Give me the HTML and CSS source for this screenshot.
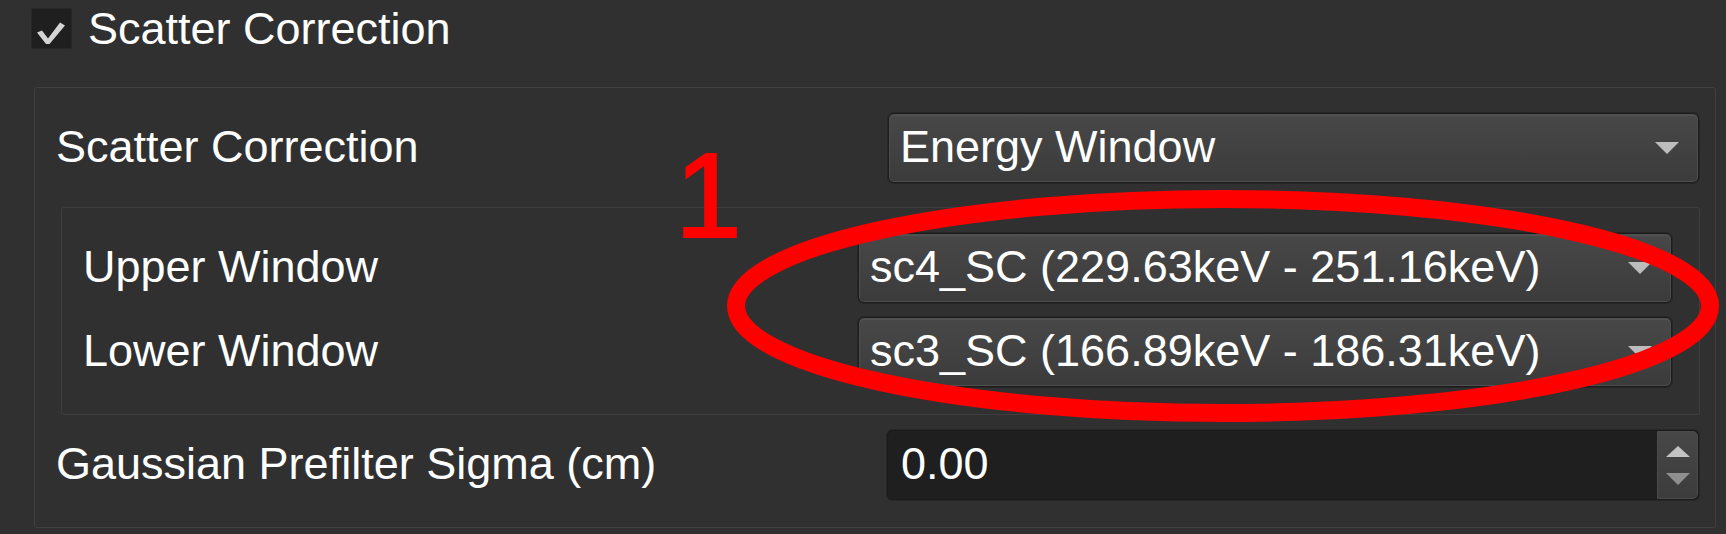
FILE: index.html
```html
<!DOCTYPE html>
<html lang="en">
<head>
<meta charset="utf-8">
<title>Scatter Correction</title>
<link rel="stylesheet" href="styles.css">
</head>
<body>
<div class="panel">
  <div class="header">
    <span class="checkbox">
      <svg class="check" width="41" height="41" viewBox="0 0 41 41"><path d="M6 24.5 L11 22.5 L17 30.5 L29 14.5 L34 17.5 L18.5 36 L15 36 Z" fill="#d4d4d4"/></svg>
    </span>
    <span class="title">Scatter Correction</span>
  </div>

  <div class="group">
    <div class="row row-outer">
      <span class="label">Scatter Correction</span>
      <div class="combo"><span class="combo-text">Energy Window</span><span class="arrow"></span></div>
    </div>

    <div class="subgroup">
      <div class="row row-inner">
        <span class="label">Upper Window</span>
        <div class="combo"><span class="combo-text">sc4_SC (229.63keV - 251.16keV)</span><span class="arrow"></span></div>
      </div>
      <div class="row row-inner">
        <span class="label">Lower Window</span>
        <div class="combo"><span class="combo-text">sc3_SC (166.89keV - 186.31keV)</span><span class="arrow"></span></div>
      </div>
    </div>

    <div class="row row-outer row-spin">
      <span class="label">Gaussian Prefilter Sigma (cm)</span>
      <div class="spin">
        <span class="spin-text">0.00</span>
        <div class="spin-buttons"><span class="spin-up"></span><span class="spin-down"></span></div>
      </div>
    </div>
  </div>

  <span class="mark-number">1</span>
  <svg class="mark-ellipse" width="1726" height="534" viewBox="0 0 1726 534">
    <ellipse cx="1223" cy="306" rx="487" ry="107" fill="none" stroke="#ff0000" stroke-width="18"/>
  </svg>
</div>
</body>
</html>
```

FILE: styles.css
```css
* {
  box-sizing: border-box;
}

html, body {
  margin: 0;
  padding: 0;
  background: #303030;
}

body {
  font-family: "Liberation Sans", Arial, sans-serif;
  font-size: 45px;
  color: #ffffff;
}

.panel {
  position: relative;
  width: 1726px;
  height: 534px;
  overflow: hidden;
}

.header {
  display: flex;
  align-items: center;
  gap: 16px;
  height: 49px;
  padding: 8px 0 0 31px;
}

.checkbox {
  display: block;
  width: 41px;
  height: 41px;
  background: #1f1f1f;
  border: 1px solid #272727;
  border-radius: 2px;
}

.check {
  display: block;
  margin: -1px;
}

.title {
  line-height: 41px;
  white-space: nowrap;
}

.group {
  width: 1682px;
  margin: 38px 0 0 34px;
  border: 1px solid #404040;
  border-radius: 3px;
  padding: 25px 16px 27px 21px;
}

.row {
  display: grid;
  align-items: start;
  height: 70px;
}

.row-outer {
  grid-template-columns: 832px 1fr;
}

.row-spin {
  grid-template-columns: 831px 1fr;
  margin-top: 15px;
}

.row-inner {
  grid-template-columns: 775px 1fr;
}

.row-inner + .row-inner {
  margin-top: 14px;
}

.label {
  line-height: 67px;
  white-space: nowrap;
}

.subgroup {
  margin: 24px -1px 0 5px;
  border: 1px solid #3e3e3e;
  border-radius: 3px;
  padding: 25px 27px 27px 21px;
}

.combo {
  display: flex;
  align-items: flex-start;
  height: 70px;
  padding: 0 19px 0 11px;
  border: 1px solid #1c1c1c;
  border-radius: 6px;
  background: linear-gradient(#484848, #3b3b3b);
  box-shadow: inset 0 0 0 1px #4e4e4e, inset 0 2px 0 #535353, 0 0 0 1px #262626;
}

.combo-text {
  line-height: 65px;
  white-space: nowrap;
}

.arrow {
  align-self: center;
  margin-left: auto;
  width: 0;
  height: 0;
  border-left: 12px solid transparent;
  border-right: 12px solid transparent;
  border-top: 12px solid #bdbdbd;
}

.spin {
  display: flex;
  align-items: stretch;
  height: 70px;
  padding-left: 13px;
  background: #1f1f1f;
  border: 1px solid #1a1a1a;
  border-radius: 5px;
  box-shadow: 0 0 0 1px #282828;
}

.spin-text {
  line-height: 66px;
}

.spin-buttons {
  margin-left: auto;
  width: 41px;
  display: flex;
  flex-direction: column;
  align-items: center;
  justify-content: center;
  gap: 16px;
  background: linear-gradient(#474747, #3c3c3c);
  border: 1px solid #4b4b4b;
  border-radius: 0 5px 5px 0;
}

.spin-up {
  width: 0;
  height: 0;
  border-left: 12px solid transparent;
  border-right: 12px solid transparent;
  border-bottom: 11px solid #c4c4c4;
}

.spin-down {
  width: 0;
  height: 0;
  border-left: 12px solid transparent;
  border-right: 12px solid transparent;
  border-top: 12px solid #8f8f8f;
}

.mark-number {
  position: absolute;
  left: 675px;
  top: 135px;
  font-size: 120px;
  line-height: 120px;
  color: #ff0000;
  -webkit-text-stroke: 2px #ff0000;
}

.mark-ellipse {
  position: absolute;
  left: 0;
  top: 0;
  pointer-events: none;
}
```
